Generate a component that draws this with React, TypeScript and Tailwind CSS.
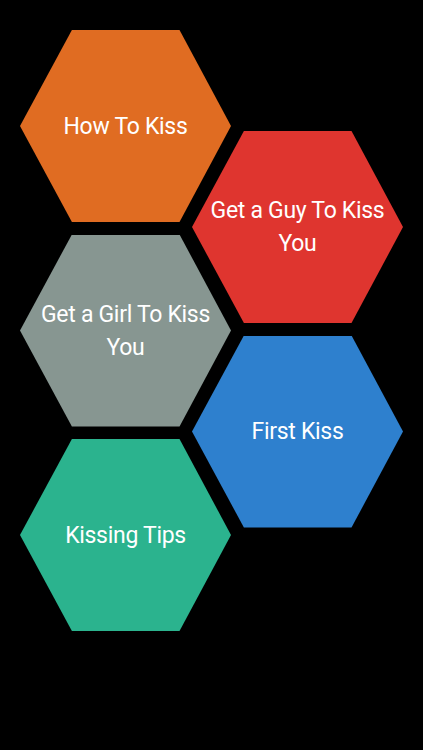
import React from "react";

const hex =
  "[clip-path:polygon(24.6%_0,75.6%_0,100%_50%,75.6%_100%,24.6%_100%,0_50%)]";

function Hex({ color, lines }: { color: string; lines: string[] }) {
  return (
    <div
      className={`w-[211px] h-[192px] flex flex-col items-center justify-center text-white text-center ${hex} ${color}`}
    >
      {lines.map((l) => (
        <div key={l} className="text-[23px] leading-[33px] tracking-[-0.3px]">
          {l}
        </div>
      ))}
    </div>
  );
}

export default function App() {
  return (
    <div
      className="w-[423px] h-[750px] bg-black flex overflow-hidden"
      style={{ fontFamily: "Roboto, 'Liberation Sans', sans-serif" }}
    >
      <div className="ml-[20px] pt-[30px] flex flex-col gap-[12.5px] shrink-0">
        <Hex color="bg-[#e06c22]" lines={["How To Kiss"]} />
        <Hex color="bg-[#879691]" lines={["Get a Girl To Kiss", "You"]} />
        <Hex color="bg-[#2bb38e]" lines={["Kissing Tips"]} />
      </div>
      <div className="ml-[-39px] pt-[131px] flex flex-col gap-[12.5px] shrink-0">
        <Hex color="bg-[#df352f]" lines={["Get a Guy To Kiss", "You"]} />
        <Hex color="bg-[#2e80ce]" lines={["First Kiss"]} />
      </div>
    </div>
  );
}
